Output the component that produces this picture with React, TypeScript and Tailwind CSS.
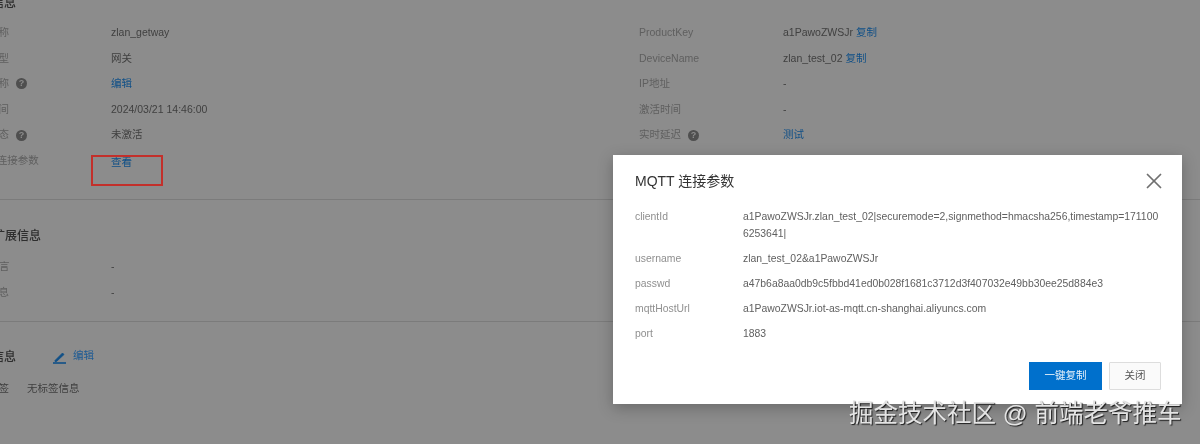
import { X } from 'lucide-react'
import type { ReactNode } from 'react'

const font = "font-['Liberation_Sans','Noto_Sans_CJK_SC',sans-serif]"

function Help() {
  return (
    <span className="ml-[7px] inline-flex w-[11px] h-[11px] rounded-full bg-[#4f4f4f] text-[#8c8c8c] text-[9px] font-bold items-center justify-center leading-none">
      ?
    </span>
  )
}

function Link({ children }: { children: ReactNode }) {
  return <span className="text-[#0f4f87]">{children}</span>
}

interface RowProps {
  label: ReactNode
  children: ReactNode
}

function Row({ label, children }: RowProps) {
  return (
    <div className="flex h-[25.6px] items-center text-[10.5px]">
      <div className="w-[144px] shrink-0 text-[#5f5f5f] flex items-center">{label}</div>
      <div className="text-[#404040] flex items-center gap-[3px] whitespace-pre">{children}</div>
    </div>
  )
}

function ModalRow({ label, children }: { label: string; children: ReactNode }) {
  return (
    <div className="flex text-[10.4px] leading-[17px] mb-2">
      <div className="w-[108px] shrink-0 text-[#8f8f8f]">{label}</div>
      <div className="w-[418px] break-all text-[#606060]">{children}</div>
    </div>
  )
}

function MqttModal() {
  return (
    <div className="absolute left-[613px] top-[155px] w-[569px] h-[249px] bg-white shadow-[0_4px_14px_rgba(0,0,0,0.25)] pl-[22px] pt-[16px] flex flex-col">
      <div className="flex items-center justify-between pr-[15px] h-[20px]">
        <h2 className="text-[14px] text-[#333333] font-normal">MQTT 连接参数</h2>
        <X className="w-[26px] h-[26px] text-[#707070]" strokeWidth={1.6} />
      </div>
      <div className="mt-[17px]">
        <ModalRow label="clientId">
          a1PawoZWSJr.zlan_test_02|securemode=2,signmethod=hmacsha256,timestamp=1711006253641|
        </ModalRow>
        <ModalRow label="username">zlan_test_02&amp;a1PawoZWSJr</ModalRow>
        <ModalRow label="passwd">a47b6a8aa0db9c5fbbd41ed0b028f1681c3712d3f407032e49bb30ee25d884e3</ModalRow>
        <ModalRow label="mqttHostUrl">a1PawoZWSJr.iot-as-mqtt.cn-shanghai.aliyuncs.com</ModalRow>
        <ModalRow label="port">1883</ModalRow>
      </div>
      <div className="mt-auto mb-[14px] mr-[21px] flex justify-end gap-[7px] text-[10.5px]">
        <button className="w-[73px] h-[28px] bg-[#0070cc] text-[#e8f2fa]">一键复制</button>
        <button className="w-[52px] h-[28px] bg-[#fafafa] border border-[#dddddd] rounded-[1px] text-[#555555]">关闭</button>
      </div>
    </div>
  )
}

export default function App() {
  return (
    <div className={`relative w-[1200px] h-[444px] overflow-hidden bg-[#8c8c8c] blur-[0.4px] ${font}`}>
      <div className="ml-[-33px] w-[1233px]">
        {/* device info */}
        <div className="-mt-[7px] h-[206.5px] border-b border-[#7b7b7b]">
          <h3 className="text-[12px] font-medium leading-[20px] text-[#2e2e2e] ml-[1px]">设备信息</h3>
          <div className="flex mt-[7px]">
            <div className="w-[672px]">
              <Row label="产品名称">zlan_getway</Row>
              <Row label="节点类型">网关</Row>
              <Row label={<>备注名称<Help /></>}><Link>编辑</Link></Row>
              <Row label="创建时间">2024/03/21 14:46:00</Row>
              <Row label={<>当前状态<Help /></>}>未激活</Row>
              <Row label="MQTT连接参数">
                <span className="mt-[4px]"><Link>查看</Link></span>
              </Row>
            </div>
            <div>
              <Row label="ProductKey">a1PawoZWSJr<Link>复制</Link></Row>
              <Row label="DeviceName">zlan_test_02<Link>复制</Link></Row>
              <Row label="IP地址">-</Row>
              <Row label="激活时间">-</Row>
              <Row label={<>实时延迟<Help /></>}><Link>测试</Link></Row>
            </div>
          </div>
        </div>

        {/* extended info */}
        <div className="h-[122px] border-b border-[#7b7b7b] pt-[26px]">
          <h3 className="text-[12px] font-medium leading-[20px] text-[#2e2e2e] ml-[26px]">扩展信息</h3>
          <div className="mt-[9px]">
            <Row label="SDK语言">-</Row>
            <Row label="模组信息">-</Row>
          </div>
        </div>

        {/* tags */}
        <div className="pt-[25px]">
          <div className="flex items-center h-[20px] ml-[1px]">
            <h3 className="text-[12px] font-medium leading-[20px] text-[#2e2e2e] w-[84px]">标签信息</h3>
            <svg className="w-[14px] h-[14px] text-[#0f4f87]" viewBox="0 0 14 14" fill="none" stroke="currentColor">
              <path d="M1 13h13" strokeWidth="1.6" />
              <path d="M3 10.5 10.5 3l1.5 1.5L4.5 11.5H3z" fill="currentColor" strokeWidth="0.8" />
            </svg>
            <span className="ml-[7px] text-[10.5px] text-[#1c5a94] -mt-[2px]">编辑</span>
          </div>
          <div className="flex items-center text-[10.5px] text-[#404040] mt-[12px] h-[20px]">
            <span className="w-[60px]">设备标签</span>
            <span>无标签信息</span>
          </div>
        </div>
      </div>

      {/* red highlight on the 查看 link */}
      <div className="absolute left-[91px] top-[155px] w-[72px] h-[31px] border-2 border-[#c3302b]" />

      <MqttModal />

      <div className="absolute left-[849px] top-[398px] text-[24.5px] leading-[32px] text-[#e4e4e4] whitespace-nowrap [text-shadow:1px_1px_1px_rgba(0,0,0,0.8)]">
        掘金技术社区 @ 前端老爷推车
      </div>
    </div>
  )
}
